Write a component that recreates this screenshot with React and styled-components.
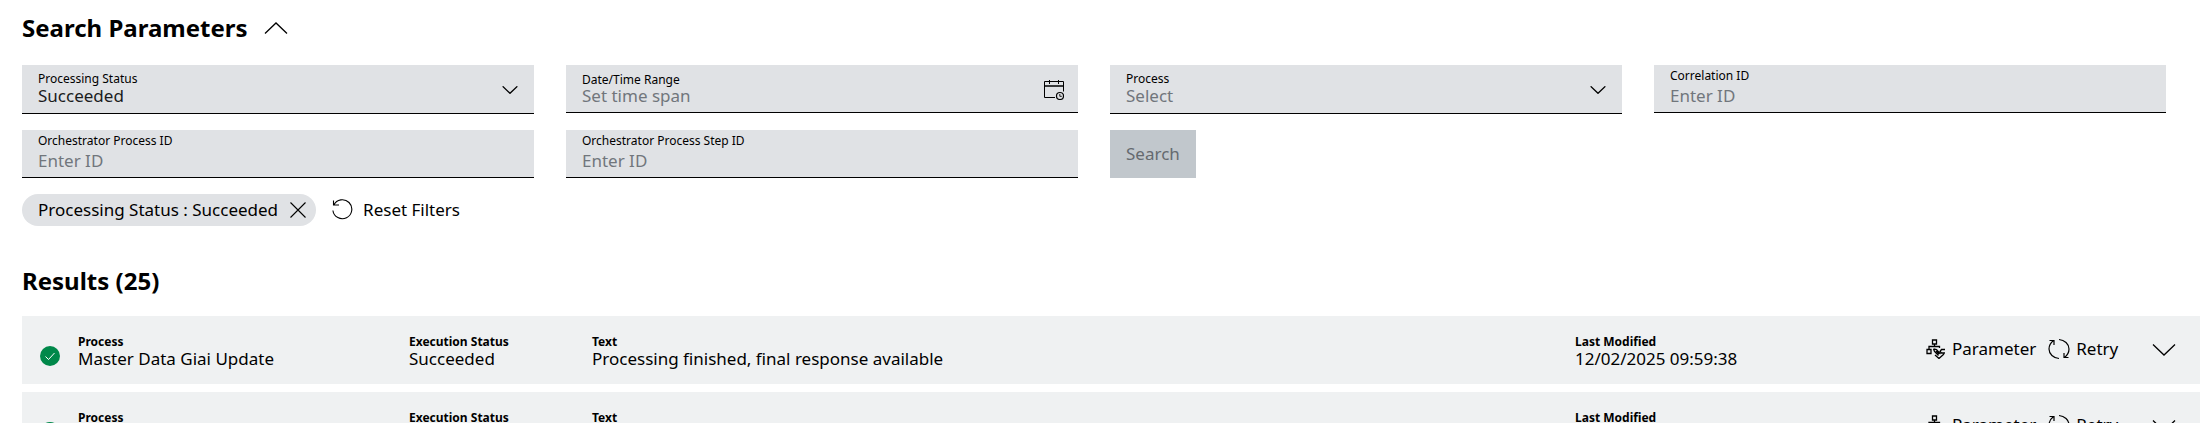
import React, { useState } from "react";
import styled, { createGlobalStyle, css } from "styled-components";

const results = [
  {
    process: "Master Data Giai Update",
    status: "Succeeded",
    text: "Processing finished, final response available",
    modified: "12/02/2025 09:59:38",
  },
  {
    process: "Master Data Giai Update",
    status: "Succeeded",
    text: "Processing finished, final response available",
    modified: "12/02/2025 09:59:38",
  },
];

const Chevron = ({ up, width = 16 }) => (
  <svg width={width} height={width / 2} viewBox="0 0 24 12" fill="none" stroke="currentColor" strokeWidth={(24 / width) * 1.3}>
    <path d={up ? "M1 11.5 12 1l11 10.5" : "M1 .5 12 11 23 .5"} />
  </svg>
);

const CalendarIcon = () => (
  <svg width="20" height="20" viewBox="0 0 20 20" fill="none" stroke="currentColor">
    <path d="M11 17.5H.5v-16h19v10M5.5 0v4M14.500 0v4" />
    <path d="M1 6h18" strokeWidth="2" opacity=".75" />
    <circle cx="16" cy="16" r="3.500" strokeWidth="1.200" />
    <path d="M15.800 14v2.300H17.800" strokeWidth=".9" />
  </svg>
);

const CloseIcon = () => (
  <svg width="16" height="16" viewBox="0 0 16 16" fill="none" stroke="currentColor" strokeWidth="1.100">
    <path d="m.5.5 15 15M15.500.5l-15 15" />
  </svg>
);

const ResetIcon = () => (
  <svg width="21" height="24" viewBox="0 0 21 24" fill="none" stroke="currentColor" strokeWidth="1.100">
    <path d="M1.800 7A9.500 9.500 0 1 1 .9 12.500M1.500 2.500V7H7" />
  </svg>
);

const RetryIcon = () => (
  <svg width="22" height="22" viewBox="0 0 22 22" fill="none" stroke="currentColor" strokeWidth="1.200">
    <path d="M11 20.500C5.500 20 1 16 1 11c0-3 1.300-6 4.500-8.500M1.500 2.500h4.500V7" />
    <path d="M11 1.500c5.500.5 10 4.500 10 9.500 0 3-1.300 6-4.500 8.500M20.500 19.500H16V15" />
  </svg>
);

const ParameterIcon = () => (
  <svg width="20" height="20" viewBox="0 0 20 20" fill="none" stroke="currentColor" strokeWidth="1.300">
    <path d="M6.500 1h4v4h-4zM1 10.500h4v4H1zM8.500 5v2.500M3 10.500V7.500h10.500V9" />
    <path d="m7.500 10 3 .5 4 4.500M7.500 10l1 2.500 4 4M10 12l3 3" />
    <path d="M19 10.500h-3.500l-1.500 2 1.500 1.500H19M18 15l-5 4.500L9 16" />
  </svg>
);

const CheckIcon = () => (
  <svg width="20" height="20" viewBox="0 0 20 20" fill="none" aria-label="Succeeded">
    <circle cx="10" cy="10" r="10" fill="#00884a" />
    <path d="m5.500 10.500 3 3 6-6.500" stroke="#fff" />
  </svg>
);

const SelectField = ({ id, label, value, empty }) => (
  <Field $select>
    <FieldLabel htmlFor={id} $top={7}>{label}</FieldLabel>
    <Select id={id} defaultValue={value} $empty={empty}>
      <option>{value}</option>
    </Select>
    <FieldIcon><Chevron /></FieldIcon>
  </Field>
);

const TextField = ({ id, label, placeholder, icon }) => (
  <Field>
    <FieldLabel htmlFor={id} $top={icon ? 8 : 4}>{label}</FieldLabel>
    <Input id={id} placeholder={placeholder} />
    {icon && <FieldIcon>{icon}</FieldIcon>}
  </Field>
);

const ResultRow = ({ result }) => (
  <Row>
    <StatusCell><CheckIcon /></StatusCell>
    <Cell><CellLabel>Process</CellLabel>{result.process}</Cell>
    <Cell><CellLabel>Execution Status</CellLabel>{result.status}</Cell>
    <Cell><CellLabel>Text</CellLabel>{result.text}</Cell>
    <Cell><CellLabel>Last Modified</CellLabel>{result.modified}</Cell>
    <Actions>
      <TextButton><ParameterIcon />Parameter</TextButton>
      <TextButton><RetryIcon />Retry</TextButton>
    </Actions>
    <IconButton aria-label="Show details"><Chevron width={24} /></IconButton>
  </Row>
);

const App = () => {
  const [open, setOpen] = useState(true);

  return (
    <>
      <GlobalStyle />
      <Page>
        <TitleRow>
          <Title>Search Parameters</Title>
          <IconButton aria-label="Toggle search parameters" onClick={() => setOpen(!open)}>
            <Chevron up={open} width={24} />
          </IconButton>
        </TitleRow>
        {open && (
          <Filters>
            <SelectField id="status" label="Processing Status" value="Succeeded" />
            <TextField id="range" label="Date/Time Range" placeholder="Set time span" icon={<CalendarIcon />} />
            <SelectField id="process" label="Process" value="Select" empty />
            <TextField id="correlation" label="Correlation ID" placeholder="Enter ID" />
            <TextField id="process-id" label="Orchestrator Process ID" placeholder="Enter ID" />
            <TextField id="step-id" label="Orchestrator Process Step ID" placeholder="Enter ID" />
            <SearchButton disabled>Search</SearchButton>
          </Filters>
        )}
        <ChipRow>
          <Chip>
            Processing Status : Succeeded
            <IconButton aria-label="Remove filter"><CloseIcon /></IconButton>
          </Chip>
          <TextButton $gap={10}><ResetIcon />Reset Filters</TextButton>
        </ChipRow>
        <Title>Results (25)</Title>
        <ResultList>
          {results.map((result, idx) => (
            <ResultRow key={idx} result={result} />
          ))}
        </ResultList>
      </Page>
    </>
  );
};

const GlobalStyle = createGlobalStyle`
  * {
    box-sizing: border-box;
  }

  body {
    margin: 0;
    background: #ffffff;
    color: #000000;
    font: 17px/24px "Noto Sans", sans-serif;
  }

  button, input, select {
    font: inherit;
    color: inherit;
  }
`;

const Page = styled.main`
  padding: 12px 0 0 22px;
  height: 100vh;
  overflow: hidden;
`;

const TitleRow = styled.div`
  display: flex;
  align-items: center;
  gap: 16px;
`;

const Title = styled.h2`
  margin: 0;
  font-size: 24px;
  line-height: 32px;
  font-weight: 700;
`;

const Filters = styled.div`
  display: grid;
  grid-template-columns: repeat(4, 1fr);
  gap: 16px 32px;
  align-items: start;
  margin: 21px 34px 0 0;
`;

const Field = styled.div`
  position: relative;
  display: flex;
  height: ${({ $select }) => ($select ? 49 : 48)}px;
  background: #e0e2e5;
  border-bottom: 1px solid #000000;
`;

// floats over the control, which fills the whole field
const FieldLabel = styled.label`
  position: absolute;
  top: ${({ $top }) => $top}px;
  left: 16px;
  font-size: 12px;
  line-height: 14px;
`;

const control = css`
  width: 100%;
  padding: 14px 48px 0 16px;
  border: 0;
  border-radius: 0;
  outline: 0;
  background: transparent;
`;

const Input = styled.input`
  ${control}

  &::placeholder {
    color: #71767c;
    opacity: 1;
  }
`;

const Select = styled.select`
  ${control}
  appearance: none;
  color: ${({ $empty }) => ($empty ? "#71767c" : "#1a1c1d")};
`;

const FieldIcon = styled.span`
  position: absolute;
  top: 2px;
  bottom: 0;
  right: 14px;
  width: 20px;
  display: flex;
  align-items: center;
  justify-content: center;
  pointer-events: none;
`;

const SearchButton = styled.button`
  justify-self: start;
  height: 48px;
  padding: 0 16px;
  border: 0;
  background: #c1c7cc;
  color: #656a6f;
`;

const ChipRow = styled.div`
  display: flex;
  align-items: center;
  gap: 16px;
  margin: 16px 0 39px;
`;

const Chip = styled.div`
  display: flex;
  align-items: center;
  gap: 12px;
  height: 32px;
  padding: 0 10px 0 16px;
  border-radius: 16px;
  background: #e0e2e5;
`;

const IconButton = styled.button`
  display: flex;
  align-items: center;
  justify-content: center;
  padding: 0;
  border: 0;
  background: none;
  cursor: pointer;
`;

const TextButton = styled(IconButton)`
  gap: ${({ $gap = 6 }) => $gap}px;
`;

const ResultList = styled.div`
  display: flex;
  flex-direction: column;
  gap: 8px;
  margin-top: 19px;
`;

const Row = styled.div`
  display: grid;
  grid-template-columns: 56px 331fr 183fr 983fr 351fr 226px 24px;
  height: 68px;
  padding-right: 24px;
  background: #eff1f2;
`;

const StatusCell = styled.div`
  padding: 30px 0 0 18px;
`;

const Cell = styled.div`
  padding-top: 18px;
  line-height: 18px;
  white-space: nowrap;
`;

const CellLabel = styled.div`
  font-size: 12px;
  line-height: 16px;
  font-weight: 700;
`;

const Actions = styled.div`
  display: flex;
  align-items: center;
  gap: 12px;
  padding-bottom: 3px;
`;

export default App;
